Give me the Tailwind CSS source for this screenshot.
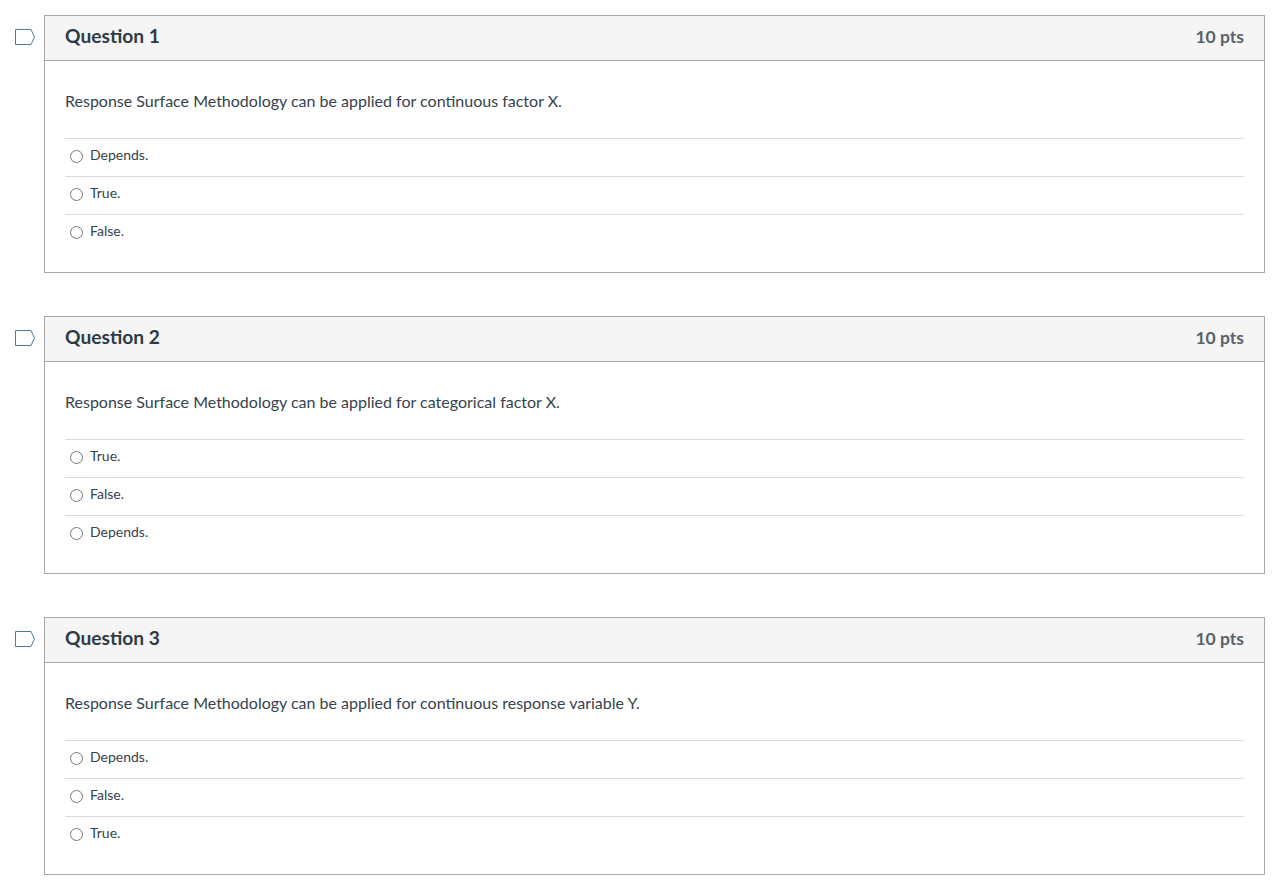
<!DOCTYPE html>
<html lang="en">
<head>
<meta charset="utf-8">
<title>Quiz</title>
<script src="https://cdn.jsdelivr.net/npm/@tailwindcss/browser@4"></script>
</head>
<body class="bg-white font-['Lato',sans-serif] text-[#2d3b45] overflow-hidden h-[883px]">
<main class="flex flex-col gap-[43px] pt-[15px] pl-[14px] pr-[11px]">

<section class="flex items-start">
  <div class="w-[30px] shrink-0 pt-[13px]"><svg width="22" height="18" viewBox="0 0 22 18" fill="none"><path d="M1.5 1.5H17L20.5 9L17 16.5H1.5Z" stroke="#4f7b9b" stroke-width="1"/></svg></div>
  <div class="flex-1 h-[258px] border border-[#a8a8a8]">
    <header class="h-[45px] bg-[#f5f5f5] border-b border-[#a8a8a8] flex items-center justify-between px-5 pb-1">
      <h2 class="text-[19.2px] leading-[26px] font-bold">Question 1</h2>
      <span class="text-[17.5px] leading-6 font-bold text-[#58636b] mt-0.5">10 pts</span>
    </header>
    <div class="px-5">
      <p class="text-base leading-6 pt-[28px] pb-[25px] text-[#36434c]">Response Surface Methodology can be applied for continuous factor X.</p>
      <ul class="text-sm leading-5 text-[#36434c]">
        <li class="h-[38px] border-t border-[#dcdcdc] flex items-start gap-[7px] pt-[6px]"><span class="size-[13px] rounded-full border border-[#777777] ml-[5px] mt-[5px]"></span><span>Depends.</span></li>
        <li class="h-[38px] border-t border-[#dcdcdc] flex items-start gap-[7px] pt-[6px]"><span class="size-[13px] rounded-full border border-[#777777] ml-[5px] mt-[5px]"></span><span>True.</span></li>
        <li class="h-[38px] border-t border-[#dcdcdc] flex items-start gap-[7px] pt-[6px]"><span class="size-[13px] rounded-full border border-[#777777] ml-[5px] mt-[5px]"></span><span>False.</span></li>
      </ul>
    </div>
  </div>
</section>

<section class="flex items-start">
  <div class="w-[30px] shrink-0 pt-[13px]"><svg width="22" height="18" viewBox="0 0 22 18" fill="none"><path d="M1.5 1.5H17L20.5 9L17 16.5H1.5Z" stroke="#4f7b9b" stroke-width="1"/></svg></div>
  <div class="flex-1 h-[258px] border border-[#a8a8a8]">
    <header class="h-[45px] bg-[#f5f5f5] border-b border-[#a8a8a8] flex items-center justify-between px-5 pb-1">
      <h2 class="text-[19.2px] leading-[26px] font-bold">Question 2</h2>
      <span class="text-[17.5px] leading-6 font-bold text-[#58636b] mt-0.5">10 pts</span>
    </header>
    <div class="px-5">
      <p class="text-base leading-6 pt-[28px] pb-[25px] text-[#36434c]">Response Surface Methodology can be applied for categorical factor X.</p>
      <ul class="text-sm leading-5 text-[#36434c]">
        <li class="h-[38px] border-t border-[#dcdcdc] flex items-start gap-[7px] pt-[6px]"><span class="size-[13px] rounded-full border border-[#777777] ml-[5px] mt-[5px]"></span><span>True.</span></li>
        <li class="h-[38px] border-t border-[#dcdcdc] flex items-start gap-[7px] pt-[6px]"><span class="size-[13px] rounded-full border border-[#777777] ml-[5px] mt-[5px]"></span><span>False.</span></li>
        <li class="h-[38px] border-t border-[#dcdcdc] flex items-start gap-[7px] pt-[6px]"><span class="size-[13px] rounded-full border border-[#777777] ml-[5px] mt-[5px]"></span><span>Depends.</span></li>
      </ul>
    </div>
  </div>
</section>

<section class="flex items-start">
  <div class="w-[30px] shrink-0 pt-[13px]"><svg width="22" height="18" viewBox="0 0 22 18" fill="none"><path d="M1.5 1.5H17L20.5 9L17 16.5H1.5Z" stroke="#4f7b9b" stroke-width="1"/></svg></div>
  <div class="flex-1 h-[258px] border border-[#a8a8a8]">
    <header class="h-[45px] bg-[#f5f5f5] border-b border-[#a8a8a8] flex items-center justify-between px-5 pb-1">
      <h2 class="text-[19.2px] leading-[26px] font-bold">Question 3</h2>
      <span class="text-[17.5px] leading-6 font-bold text-[#58636b] mt-0.5">10 pts</span>
    </header>
    <div class="px-5">
      <p class="text-base leading-6 pt-[28px] pb-[25px] text-[#36434c]">Response Surface Methodology can be applied for continuous response variable Y.</p>
      <ul class="text-sm leading-5 text-[#36434c]">
        <li class="h-[38px] border-t border-[#dcdcdc] flex items-start gap-[7px] pt-[6px]"><span class="size-[13px] rounded-full border border-[#777777] ml-[5px] mt-[5px]"></span><span>Depends.</span></li>
        <li class="h-[38px] border-t border-[#dcdcdc] flex items-start gap-[7px] pt-[6px]"><span class="size-[13px] rounded-full border border-[#777777] ml-[5px] mt-[5px]"></span><span>False.</span></li>
        <li class="h-[38px] border-t border-[#dcdcdc] flex items-start gap-[7px] pt-[6px]"><span class="size-[13px] rounded-full border border-[#777777] ml-[5px] mt-[5px]"></span><span>True.</span></li>
      </ul>
    </div>
  </div>
</section>

</main>
</body>
</html>
